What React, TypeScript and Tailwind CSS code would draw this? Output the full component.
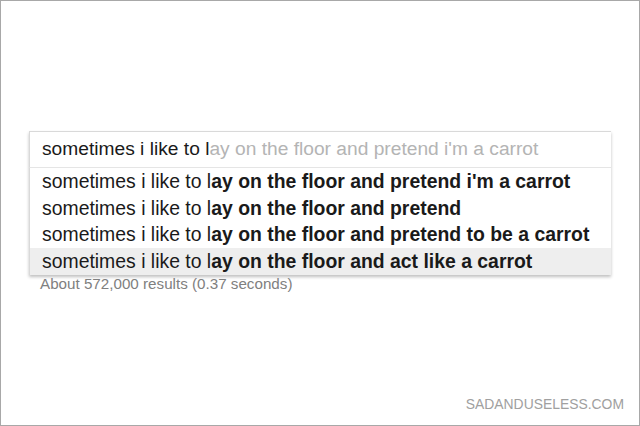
import React from 'react';

const prefix = 'sometimes i like to l';

const suggestions = [
  "ay on the floor and pretend i'm a carrot",
  'ay on the floor and pretend',
  'ay on the floor and pretend to be a carrot',
  'ay on the floor and act like a carrot',
];

const App = () => {
  return (
    <div
      className="w-[640px] h-[426px] bg-white border border-[#a8a8a8] flex flex-col overflow-hidden"
      style={{ fontFamily: '"Liberation Sans", Arial, sans-serif' }}
    >
      <div className="pt-[130px] pl-[28px]">
        <div className="w-[582px] shadow-[0_2px_3px_rgba(0,0,0,0.25)]">
          {/* search input */}
          <div className="h-[37px] border-t border-l border-[#d9d9d9] border-b border-b-[#e5e5e5] flex items-center pl-[12px] text-[19.2px] text-[#1a1a1a] whitespace-pre">
            <span>{prefix}</span>
            <span className="text-[#b4b4b4]">ay on the floor and pretend i'm a carrot</span>
          </div>
          {/* suggestions */}
          <div className="border-l border-[#d9d9d9] flex flex-col">
            {suggestions.map((s, i) => (
              <div
                key={i}
                className={
                  'h-[26.75px] flex items-center pl-[12px] text-[19.4px] text-[#1a1a1a] whitespace-pre ' +
                  (i === 3 ? 'bg-[#eeeeee]' : 'bg-white')
                }
              >
                <span>{prefix}</span>
                <span className="font-bold">{s}</span>
              </div>
            ))}
          </div>
        </div>
        <div className="pl-[11px] text-[15.2px] leading-[18px] text-[#808080]">
          About 572,000 results (0.37 seconds)
        </div>
      </div>
      <div className="mt-auto mb-[10px] pr-[15px] text-right text-[13.9px] text-[#a0a0a0]">
        SADANDUSELESS.COM
      </div>
    </div>
  );
};

export default App;
